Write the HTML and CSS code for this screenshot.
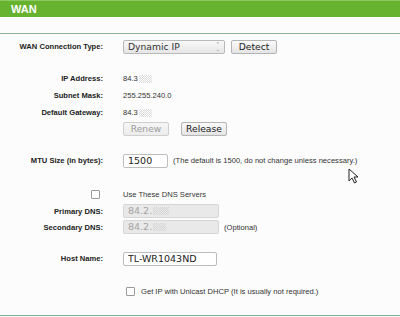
FILE: index.html
```html
<!DOCTYPE html>
<html lang="en">
<head>
  <meta charset="UTF-8">
  <title>WAN</title>
  <link rel="stylesheet" href="styles.css">
</head>
<body>

  <div class="title-bar">WAN</div>
  <div class="spacer"></div>

  <div id="form">
    <div class="row first">
      <label class="lbl">WAN Connection Type:</label>
      <div class="val">
        <div class="select">Dynamic IP<span class="arrows">&#8963;<br>&#8964;</span></div>
        <button class="btn detect">Detect</button>
      </div>
    </div>

    <div class="row gap">
      <label class="lbl">IP Address:</label>
      <div class="val">84.3<span class="blur"></span></div>
    </div>
    <div class="row">
      <label class="lbl">Subnet Mask:</label>
      <div class="val">255.255.240.0</div>
    </div>
    <div class="row">
      <label class="lbl">Default Gateway:</label>
      <div class="val">84.3<span class="blur"></span></div>
    </div>
    <div class="row short">
      <label class="lbl"></label>
      <div class="val">
        <button class="btn" disabled>Renew</button>
        <button class="btn release">Release</button>
      </div>
    </div>

    <div class="row mtu">
      <label class="lbl">MTU Size (in bytes):</label>
      <div class="val">
        <input class="txt mtu-input" type="text" value="1500">
        <span class="note">(The default is 1500, do not change unless necessary.)</span>
      </div>
    </div>

    <div class="row dns">
      <label class="lbl"><span class="check"></span></label>
      <div class="val">Use These DNS Servers</div>
    </div>
    <div class="row slim">
      <label class="lbl">Primary DNS:</label>
      <div class="val"><div class="txt off">84.2.<span class="blur wide"></span></div></div>
    </div>
    <div class="row slim">
      <label class="lbl">Secondary DNS:</label>
      <div class="val"><div class="txt off">84.2.<span class="blur"></span></div><span class="note">(Optional)</span></div>
    </div>

    <div class="row gap">
      <label class="lbl">Host Name:</label>
      <div class="val"><input class="txt host" type="text" value="TL-WR1043ND"></div>
    </div>

    <div class="row unicast">
      <label class="lbl"></label>
      <div class="val"><span class="check"></span><span class="uni-text">Get IP with Unicast DHCP (It is usually not required.)</span></div>
    </div>
  </div>

  <div class="bottom-line"></div>

  <!-- mouse pointer -->
  <svg class="cursor" width="11" height="16" viewBox="0 0 11 16">
    <path d="M1 1 L1 13 L4 10 L6.5 15 L8.5 14 L6 9 L10 9 Z" fill="#fff" stroke="#222" stroke-width="1"/>
  </svg>

</body>
</html>
```

FILE: styles.css
```css
body {
  margin: 0;
  background-color: #fcfcfc;
  font-family: "Liberation Sans", Arial, sans-serif;
  font-size: 7.6px;
  color: #2a2a2a;
  width: 400px;
  height: 317px;
  overflow: hidden;
  position: relative;
}

.title-bar {
  height: 17px;
  line-height: 17px;
  background-color: #67b22f;
  border-top: 1px solid #8cc862;
  box-sizing: border-box;
  color: #fff;
  font-weight: bold;
  font-size: 11px;
  padding-left: 11px;
}

.spacer {
  height: 16px;
  border-bottom: 1px solid #8fb29a;
}

.row {
  display: flex;
  align-items: center;
  height: 17px;
}

.row.first { margin-top: 4px; }
.row.gap { margin-top: 15px; }
.row.short { height: 15px; }
.row.mtu { margin-top: 16px; }
.row.dns { margin-top: 17px; }
.row.slim { height: 16px; }
.row.unicast { margin-top: 16px; }

.lbl {
  width: 103px;
  text-align: right;
  font-weight: bold;
  color: #222;
  flex-shrink: 0;
}

.val {
  margin-left: 20px;
  display: flex;
  align-items: center;
  color: #333;
  white-space: nowrap;
}

.select {
  width: 102px;
  height: 14px;
  box-sizing: border-box;
  border: 1px solid #b9b9b9;
  border-radius: 2px;
  background: linear-gradient(#f8f8f8, #e6e6e6);
  font-family: "DejaVu Sans", sans-serif;
  font-size: 9.2px;
  color: #333;
  padding-left: 4px;
  line-height: 12px;
  position: relative;
}

.arrows {
  position: absolute;
  right: 4px;
  top: 1px;
  font-size: 5px;
  line-height: 5px;
  color: #777;
}

.btn {
  height: 14px;
  padding: 0;
  border: 1px solid #b4b4b4;
  border-radius: 2px;
  background: linear-gradient(#fafafa, #e4e4e4);
  font-family: "DejaVu Sans", sans-serif;
  font-size: 9.2px;
  color: #222;
  width: 46px;
  line-height: 12px;
}

.btn:disabled {
  color: #9c9c9c;
  border-color: #cfcfcf;
  background: linear-gradient(#f6f6f6, #ececec);
}

.detect { margin-left: 6px; }
.release { margin-left: 12px; }

.txt {
  height: 14px;
  box-sizing: border-box;
  border: 1px solid #bdbdbd;
  border-radius: 2px;
  background: #fff;
  font-family: "DejaVu Sans", sans-serif;
  font-size: 9.5px;
  color: #222;
  padding: 0 0 0 4px;
  margin: 0;
}

.mtu-input { width: 45px; }
.host { width: 94px; }

.note {
  margin-left: 5px;
  color: #333;
}

.off {
  width: 96px;
  background: #e9e9e9;
  border-color: #d6d6d6;
  color: #a3a3a3;
  line-height: 12px;
  display: flex;
  align-items: center;
}

.blur {
  display: inline-block;
  width: 13px;
  height: 8px;
  margin-left: 1px;
  background-image: repeating-conic-gradient(#c4c4c4 0 25%, transparent 0 50%);
  background-size: 2px 2px;
  opacity: 0.55;
}

.blur.wide { width: 16px; }

.check {
  display: inline-block;
  width: 7px;
  height: 7px;
  border: 1px solid #9a9a9a;
  border-radius: 1px;
  background: #fff;
  margin-right: 3px;
  vertical-align: middle;
}

.unicast .check { margin-left: 3px; margin-right: 6px; }

.bottom-line {
  margin-top: 15px;
  border-top: 1px solid #86ae94;
}

.cursor {
  position: absolute;
  left: 348px;
  top: 168px;
}
```
